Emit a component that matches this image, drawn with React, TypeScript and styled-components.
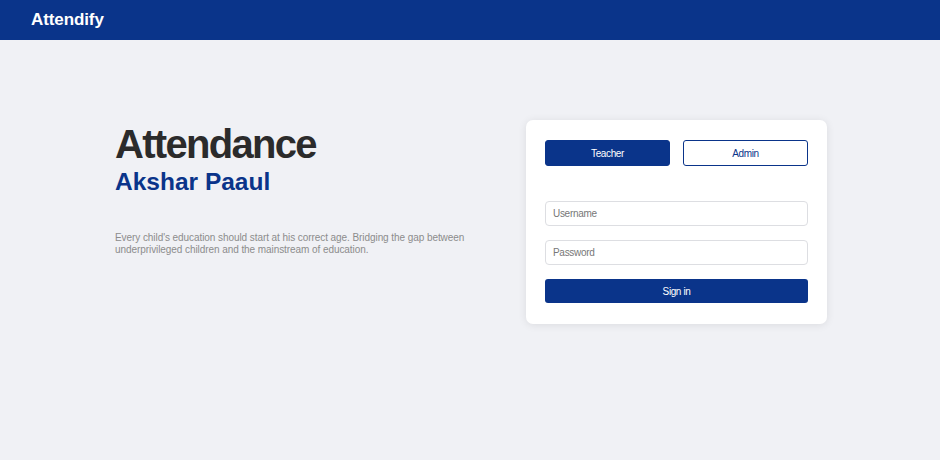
import React from "react";
import styled, { createGlobalStyle } from "styled-components";

const Global = createGlobalStyle`
  html, body { margin: 0; padding: 0; }
  body {
    background: #f0f1f5;
    font-family: "Liberation Sans", Arial, sans-serif;
    min-height: 460px;
  }
  * { box-sizing: border-box; }
`;

const Header = styled.header`
  height: 40px;
  background: #0a348a;
  display: flex;
  align-items: center;
  padding: 0 31px;
`;

const Logo = styled.div`
  color: #ffffff;
  font-size: 17px;
  font-weight: 700;
  letter-spacing: -0.1px;
`;

const Main = styled.main`
  display: flex;
  align-items: flex-start;
  padding: 80px 0 0 115px;
  gap: 41px;
`;

const Intro = styled.section`
  width: 370px;
  padding-top: 3px;
`;

const Title = styled.h1`
  margin: 0;
  font-size: 40px;
  line-height: 42px;
  font-weight: 700;
  color: #2b2b2b;
  letter-spacing: -1.7px;
`;

const Subtitle = styled.h2`
  margin: 3px 0 0;
  font-size: 24.5px;
  line-height: 28px;
  font-weight: 700;
  color: #0a348a;
`;

const Blurb = styled.p`
  margin: 36px 0 0;
  font-size: 10px;
  line-height: 12px;
  letter-spacing: -0.07px;
  color: #8c8c8c;
`;

const Card = styled.div`
  width: 301px;
  background: #ffffff;
  border-radius: 7px;
  box-shadow: 0 1px 8px rgba(0, 0, 0, 0.09);
  padding: 20px 19px 21px;
  display: flex;
  flex-direction: column;
`;

const RoleRow = styled.div`
  display: grid;
  grid-template-columns: 1fr 1fr;
  gap: 13px;
  margin-bottom: 35px;
`;

const RoleButton = styled.button<{ $active?: boolean }>`
  height: 26px;
  border-radius: 3px;
  border: 1.5px solid #0a348a;
  background: ${(p) => (p.$active ? "#0a348a" : "#ffffff")};
  color: ${(p) => (p.$active ? "#ffffff" : "#0a348a")};
  font-family: "Liberation Sans", Arial, sans-serif;
  font-size: 10px;
  letter-spacing: -0.4px;
  cursor: pointer;
`;

const Field = styled.input`
  height: 25px;
  border: 1px solid #dddee2;
  border-radius: 4px;
  padding: 0 7px;
  font-family: "Liberation Sans", Arial, sans-serif;
  font-size: 10px;
  letter-spacing: -0.3px;
  margin-bottom: 14px;
  outline: none;
  &::placeholder { color: #777; }
`;

const Submit = styled.button`
  height: 24px;
  border: none;
  border-radius: 3px;
  background: #0a348a;
  color: #ffffff;
  font-family: "Liberation Sans", Arial, sans-serif;
  font-size: 10px;
  letter-spacing: -0.4px;
  cursor: pointer;
`;

export default function App() {
  return (
    <>
      <Global />
      <Header>
        <Logo>Attendify</Logo>
      </Header>
      <Main>
        <Intro>
          <Title>Attendance</Title>
          <Subtitle>Akshar Paaul</Subtitle>
          <Blurb>
            Every child's education should start at his correct age. Bridging the gap between
            underprivileged children and the mainstream of education.
          </Blurb>
        </Intro>
        <Card>
          <RoleRow>
            <RoleButton $active>Teacher</RoleButton>
            <RoleButton>Admin</RoleButton>
          </RoleRow>
          <Field placeholder="Username" />
          <Field placeholder="Password" type="password" />
          <Submit>Sign in</Submit>
        </Card>
      </Main>
    </>
  );
}
